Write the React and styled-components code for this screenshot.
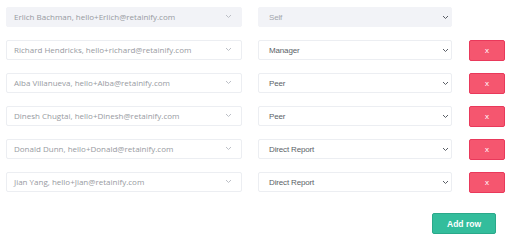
import styled, { createGlobalStyle } from "styled-components";

const GlobalStyle = createGlobalStyle`
  body {
    margin: 0;
    background: #ffffff;
    font-family: "Liberation Sans", Arial, sans-serif;
  }
`;

const rows = [
  { person: "Erlich Bachman, hello+Erlich@retainify.com", role: "Self", locked: true },
  { person: "Richard Hendricks, hello+richard@retainify.com", role: "Manager" },
  { person: "Alba Villanueva, hello+Alba@retainify.com", role: "Peer" },
  { person: "Dinesh Chugtai, hello+Dinesh@retainify.com", role: "Peer" },
  { person: "Donald Dunn, hello+Donald@retainify.com", role: "Direct Report" },
  { person: "Jian Yang, hello+Jian@retainify.com", role: "Direct Report" },
];

function Chevron({ light }) {
  return (
    <svg width="7" height="5" viewBox="0 0 7 5">
      <path
        d="M1 1 L3.5 3.5 L6 1"
        fill="none"
        stroke={light ? "#bcbfc6" : "#5a5e66"}
        strokeWidth="1"
      />
    </svg>
  );
}

export default function App() {
  return (
    <>
      <GlobalStyle />
      <Page>
        {rows.map((r) => (
          <Row key={r.person}>
            <PersonSelect $locked={r.locked}>
              <span>{r.person}</span>
              <Chevron light />
            </PersonSelect>
            <RoleSelect $locked={r.locked}>
              <span>{r.role}</span>
              <Chevron />
            </RoleSelect>
            {!r.locked && <RemoveButton>x</RemoveButton>}
          </Row>
        ))}
        <Footer>
          <AddButton>Add row</AddButton>
        </Footer>
      </Page>
    </>
  );
}

const Page = styled.div`
  padding: 7px 0 0 6px;
  display: flex;
  flex-direction: column;
  gap: 13px;
  width: 500px;
`;

const Row = styled.div`
  display: grid;
  grid-template-columns: 236px 194px 36px;
  column-gap: 16px;
  height: 20px;
  & > :nth-child(3) {
    margin-left: 1px;
  }
`;

const Box = styled.div`
  box-sizing: border-box;
  height: 20px;
  display: flex;
  align-items: center;
  justify-content: space-between;
  border-radius: 2px;
  border: 1px solid ${(p) => (p.$locked ? "#f2f3f7" : "#eceef2")};
  background: ${(p) => (p.$locked ? "#f2f3f7" : "#ffffff")};
  svg {
    flex: none;
  }
`;

const PersonSelect = styled(Box)`
  padding: 0 9px 1px 7px;
  font-family: "Open Sans", sans-serif;
  font-size: 8px;
  color: #979aa1;
`;

const RoleSelect = styled(Box)`
  padding: 0 2px 0 10px;
  font-family: "Liberation Sans", Arial, sans-serif;
  font-size: 8px;
  letter-spacing: -0.15px;
  color: ${(p) => (p.$locked ? "#a3a6ad" : "#5b5f67")};
`;

const RemoveButton = styled.button`
  box-sizing: border-box;
  height: 21px;
  width: 36px;
  padding: 0;
  border: 1px solid #e9395b;
  border-radius: 2px;
  background: #f5566f;
  color: #ffffff;
  font-family: "Liberation Sans", Arial, sans-serif;
  font-size: 8px;
`;

const Footer = styled.div`
  display: flex;
  justify-content: flex-end;
  padding-right: 10px;
  margin-top: 8px;
`;

const AddButton = styled.button`
  box-sizing: border-box;
  height: 21px;
  width: 64px;
  padding: 0;
  border: 1px solid #2aa98a;
  border-radius: 2px;
  background: #33bd9c;
  color: #ffffff;
  font-family: "Liberation Sans", Arial, sans-serif;
  font-size: 8.5px;
  font-weight: bold;
`;
